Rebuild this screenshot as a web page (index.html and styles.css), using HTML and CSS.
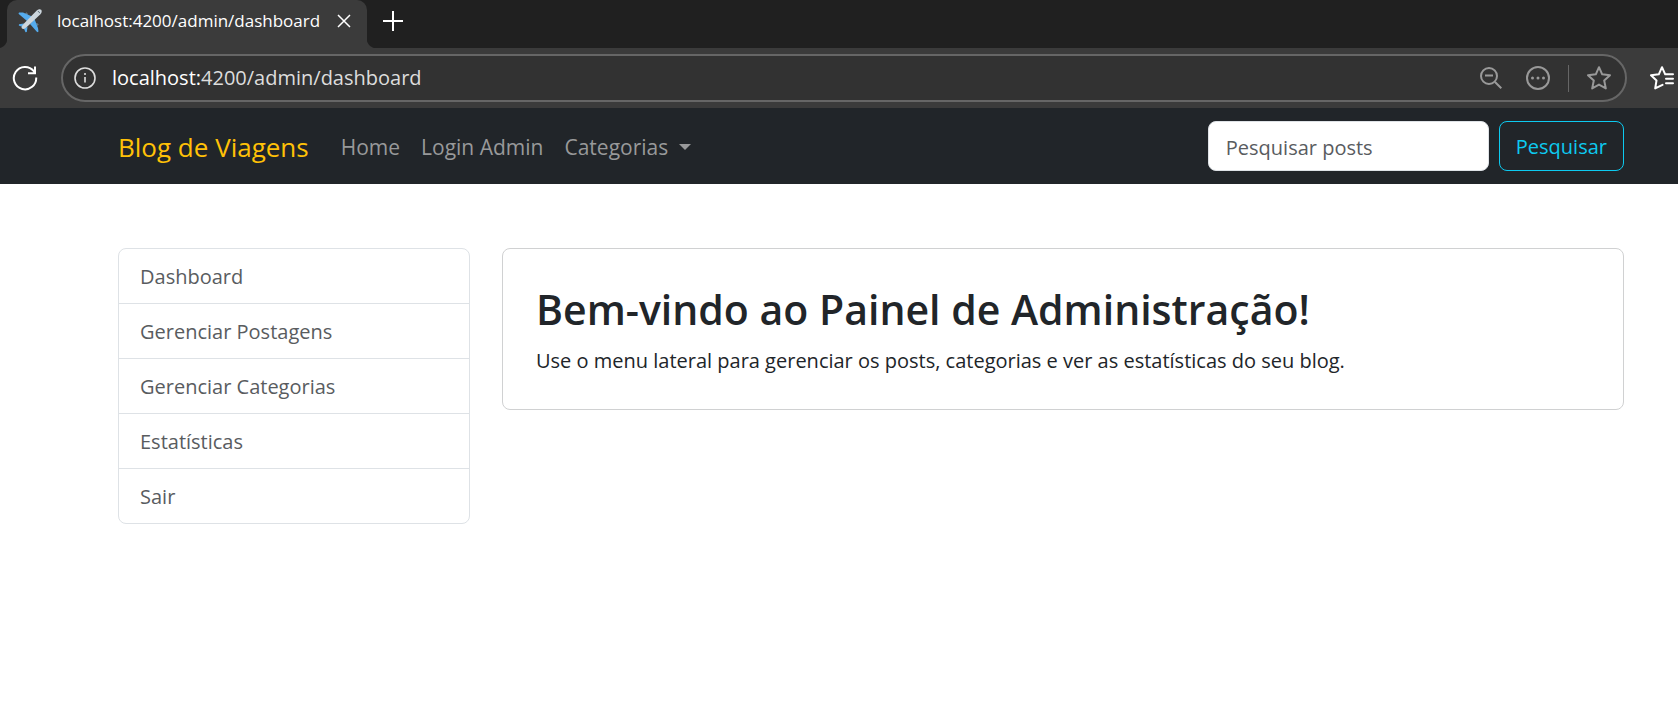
FILE: index.html
```html
<!DOCTYPE html>
<html lang="pt-BR">
<head>
<meta charset="utf-8">
<title>Blog de Viagens</title>
<link rel="stylesheet" href="styles.css">
</head>
<body>
<div class="browser">
  <div class="tab-strip">
    <div class="tab">
      <svg class="tab-icon" viewBox="0 0 24 24" aria-hidden="true">
        <path fill="#66757f" d="M7 4.500l1.500-1.200 1.200 1.200v2zM19.500 17l1.200-1.500-1.200-1.200h-2z"/>
        <path fill="#55acee" d="M14 7.500 5 3.600 1 3.400 0.500 4.800 9 12zM16.500 10 20 19 20.500 22.500 19.300 23.300 12 15zM6 14.500 1 15.300 0.800 16.500 5 18.300zM9.500 18 8.800 23 7.500 23.300 5.700 19z"/>
        <path fill="#ccd6dd" d="M23.200.8c-1.200-1-3.200-.5-4.700 1L5.500 15c-1 1.200-1.800 2.600-2 3.500-.1.700.9 1.700 1.800 1.600 1-.2 2.500-1 3.500-2L22.200 5.500c1.500-1.500 2-3.700 1-4.700z"/>
        <path fill="none" stroke="#66757f" stroke-width="1" d="M19.800 2.200q1.500.4 2 2"/>
      </svg>
      <span class="tab-title">localhost:4200/admin/dashboard</span>
      <button class="icon-button" type="button" aria-label="Fechar guia">
        <svg class="icon-close" viewBox="0 0 14 14"><path d="M1 1l12 12M13 1 1 13"/></svg>
      </button>
    </div>
    <button class="icon-button new-tab" type="button" aria-label="Nova guia">
      <svg class="icon-plus" viewBox="0 0 22 22"><path d="M11 1v20M1 11h20"/></svg>
    </button>
  </div>
  <div class="toolbar">
    <button class="icon-button" type="button" aria-label="Recarregar">
      <svg class="icon-reload" viewBox="0 0 26 26"><path d="M24.200 12.500A11.200 11.200 0 1 1 21.800 6.200L23 8M23 1.500V8.200H16"/></svg>
    </button>
    <div class="address">
      <button class="icon-button" type="button" aria-label="Informações do site">
        <svg class="icon-info" viewBox="0 0 22 22"><circle cx="11" cy="11" r="10"/><path d="M11 10v5.500M11 6v2"/></svg>
      </button>
      <span class="url"><span class="url-host">localhost:</span>4200/admin/dashboard</span>
      <div class="address-actions">
        <button class="icon-button" type="button" aria-label="Zoom">
          <svg class="icon-zoom" viewBox="0 0 22 22"><circle cx="9" cy="9" r="8"/><path d="M5 8.500h8M15 15l6.300 6.300"/></svg>
        </button>
        <button class="icon-button" type="button" aria-label="Mais opções">
          <svg class="icon-more" viewBox="0 0 24 24"><circle cx="12" cy="12" r="11"/><g class="dots"><circle cx="6.500" cy="12" r="1.500"/><circle cx="12" cy="12" r="1.500"/><circle cx="17.500" cy="12" r="1.500"/></g></svg>
        </button>
        <span class="divider"></span>
        <button class="icon-button" type="button" aria-label="Adicionar aos favoritos">
          <svg class="icon-star" viewBox="0 0 24 24"><path d="M12 1.200 15.200 8.300 23 9.200 17.200 14.500 18.800 22.400 12 18.600 5.200 22.400 6.800 14.500 1 9.200 8.800 8.300z"/></svg>
        </button>
      </div>
    </div>
    <button class="icon-button favorites" type="button" aria-label="Favoritos">
      <svg class="icon-favorites" viewBox="0 0 24 24"><path d="M12.500 18.800 5.200 22.400 6.500 14.500 1 9.200 8.800 8.300 12 1.200 15.200 8.300H23M16 12.800H23M16 17.300H23"/></svg>
    </button>
  </div>
</div>

<header class="navbar">
  <a class="brand" href="#">Blog de Viagens</a>
  <nav class="nav-links">
    <a class="nav-link" href="#">Home</a>
    <a class="nav-link" href="#">Login Admin</a>
    <a class="nav-link dropdown" href="#">Categorias</a>
  </nav>
  <form class="search">
    <input class="search-input" type="search" placeholder="Pesquisar posts" aria-label="Pesquisar posts">
    <button class="search-button" type="submit">Pesquisar</button>
  </form>
</header>

<div class="layout">
  <nav class="menu">
    <a class="menu-item" href="#">Dashboard</a>
    <a class="menu-item" href="#">Gerenciar Postagens</a>
    <a class="menu-item" href="#">Gerenciar Categorias</a>
    <a class="menu-item" href="#">Estatísticas</a>
    <a class="menu-item" href="#">Sair</a>
  </nav>
  <main class="card">
    <h1 class="card-title">Bem-vindo ao Painel de Administração!</h1>
    <p class="card-text">Use o menu lateral para gerenciar os posts, categorias e ver as estatísticas do seu blog.</p>
  </main>
</div>
</body>
</html>
```

FILE: styles.css
```css
*, *::before, *::after { box-sizing: border-box; }

body {
  margin: 0;
  background: #fff;
  color: #212529;
  font-family: "Open Sans", "Noto Sans", sans-serif;
  font-size: 20px;
  line-height: 32px;
}

a { color: inherit; text-decoration: none; }
button, input { font: inherit; }
svg { display: block; fill: none; stroke: currentColor; stroke-width: 2; }

/* Browser window */
.browser { background: #3b3b3b; color: #fff; }
.tab-strip {
  display: flex;
  height: 48px;
  padding-left: 7px;
  background: #202020;
}
.tab {
  position: relative;
  display: flex;
  align-items: center;
  width: 360px;
  padding: 0 16px 6px 11px;
  border-radius: 10px 10px 0 0;
  background: #3b3b3b;
}
.tab::before, .tab::after {
  content: "";
  position: absolute;
  bottom: 0;
  width: 10px;
  height: 10px;
}
.tab::before { right: 100%; background: radial-gradient(circle at 0 0, #202020 10px, #3b3b3b 11px); }
.tab::after { left: 100%; background: radial-gradient(circle at 100% 0, #202020 10px, #3b3b3b 11px); }
.tab-icon { width: 24px; height: 24px; stroke: none; }
.tab-title { flex: 1; padding-left: 15px; font-size: 17px; line-height: 24px; white-space: nowrap; }
.icon-button {
  display: flex;
  flex: none;
  padding: 0;
  border: 0;
  background: none;
  color: inherit;
}
.icon-close { width: 14px; height: 14px; stroke-width: 1.5; }
.new-tab { align-items: center; padding: 0 0 6px 15px; }
.icon-plus { width: 22px; height: 22px; }
.toolbar {
  display: flex;
  align-items: center;
  gap: 23px;
  height: 60px;
  padding: 0 0 0 12px;
}
.icon-reload { width: 26px; height: 26px; }
.address {
  display: flex;
  flex: 1;
  align-items: center;
  height: 48px;
  padding: 0 14px 0 11px;
  border: 2px solid #666;
  border-radius: 24px;
  background: #323232;
  color: #ddd;
}
.icon-info { width: 22px; height: 22px; stroke-width: 1.6; }
.url { flex: 1; padding-left: 16px; }
.url-host { color: #fff; }
.address-actions { display: flex; align-items: center; gap: 18px; color: #999; }
.icon-zoom { width: 22px; height: 22px; margin-right: 6px; }
.icon-more, .icon-star, .icon-favorites { width: 24px; height: 24px; }
.dots { fill: currentColor; stroke: none; }
.divider { width: 1px; height: 27px; background: #666; }
.icon-star, .icon-favorites { stroke-linejoin: round; stroke-linecap: round; }
.favorites { padding-right: 4px; }

/* Site navigation */
.navbar {
  display: flex;
  align-items: center;
  padding: 13px 54px 13px 118px;
  background: #212529;
}
.brand { margin-right: 32px; padding-top: 2px; color: #ffc107; font-size: 26px; }
.nav-links { display: flex; gap: 21px; padding-top: 2px; color: #98999a; font-size: 21px; }
.dropdown { display: flex; align-items: center; gap: 11px; }
.dropdown::after {
  content: "";
  border: 6px solid transparent;
  border-top-color: currentColor;
  border-bottom: 0;
}
.search { display: flex; gap: 10px; margin-left: auto; }
.search-input {
  width: 281px;
  height: 50px;
  padding: 2px 17px 0;
  border: 1px solid #dee2e6;
  border-radius: 8px;
  background: #fff;
  color: #212529;
}
.search-input::placeholder { color: #595c5f; opacity: 1; }
.search-button {
  padding: 2px 16px 0;
  border: 1px solid #0dcaf0;
  border-radius: 8px;
  background: transparent;
  color: #0dcaf0;
}

/* Admin area */
.layout {
  display: grid;
  grid-template-columns: minmax(0, 352fr) minmax(0, 1122fr);
  gap: 32px;
  align-items: start;
  padding: 64px 54px 64px 118px;
}
.menu { border: 1px solid #dee2e6; border-radius: 8px; }
.menu-item { display: block; padding: 12px 21px 10px; color: #595c5f; }
.menu-item + .menu-item { border-top: 1px solid #dee2e6; }
.card { padding: 34px 33px 32px; border: 1px solid #d0d1d2; border-radius: 8px; }
.card-title { margin: 0 0 10px; font-size: 41px; font-weight: 600; line-height: 52px; }
.card-text { margin: 0; }
```
